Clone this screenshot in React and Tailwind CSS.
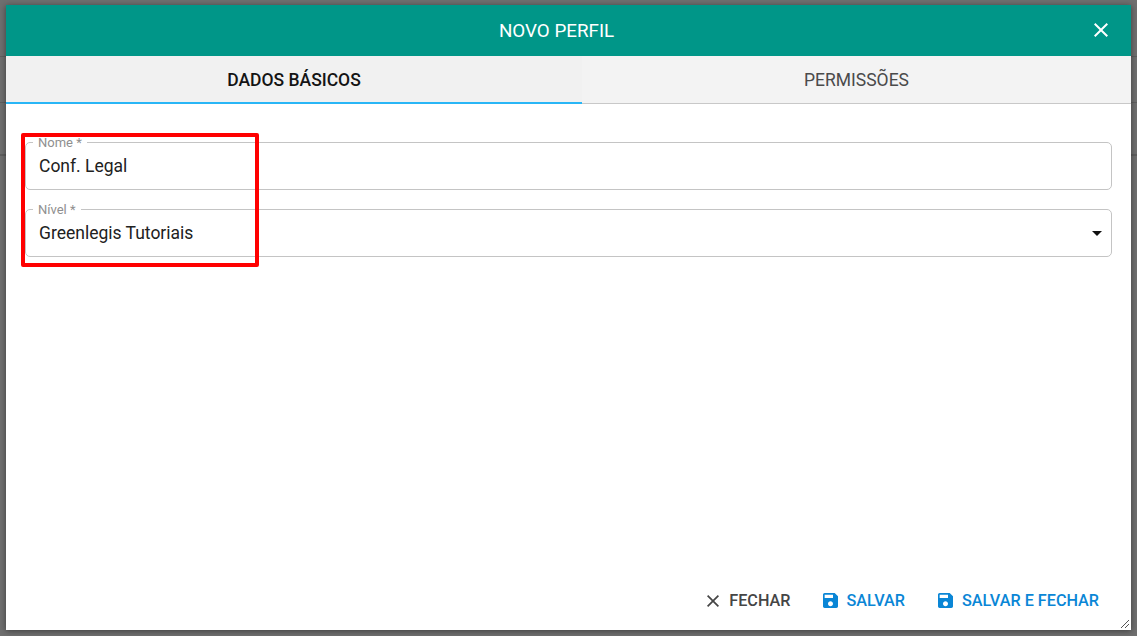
import React from 'react';

const CLOSE_PATH = 'M19 6.41L17.59 5 12 10.59 6.41 5 5 6.41 10.59 12 5 17.59 6.41 19 12 13.41 17.59 19 19 17.59 13.41 12z';

function CloseIcon({ size }) {
  return (
    <svg width={size} height={size} viewBox="5 5 14 14" fill="currentColor">
      <path d={CLOSE_PATH} />
    </svg>
  );
}

function SaveIcon() {
  return (
    <svg width="15" height="15" viewBox="3 3 18 18" fill="currentColor">
      <path d="M17 3H5c-1.11 0-2 .9-2 2v14c0 1.1.89 2 2 2h14c1.1 0 2-.9 2-2V7l-4-4zm-5 16c-1.66 0-3-1.34-3-3s1.34-3 3-3 3 1.34 3 3-1.34 3-3 3zm3-10H5V5h10v4z" />
    </svg>
  );
}

function Field({ label, value, select }) {
  return (
    <div className="relative h-[48px] rounded-[5px] border border-[#c4c4c4] pl-[13px] pr-[9px] flex items-center justify-between">
      <span className="absolute -top-[7px] left-[7px] bg-white px-[5px] text-[13px] leading-[14px] text-[#8f8f8f]">{label}</span>
      <span className="text-[17.5px] text-[#212121]">{value}</span>
      {select && (
        <svg width="10" height="5" viewBox="0 0 10 5" className="text-[#111]" fill="currentColor">
          <path d="M0 0h10L5 5z" />
        </svg>
      )}
    </div>
  );
}

export default function App() {
  return (
    <div className="relative w-[1137px] h-[636px] overflow-hidden bg-[#6f6f6f] font-['Roboto',sans-serif]">
      {/* page behind the dialog, only its row lines show */}
      <div className="h-[57px] border-b border-[#5e5e5e]" />
      <div className="h-[46px] border-b border-[#5e5e5e]" />
      <div className="h-[53px] border-b-2 border-[#5e5e5e]" />

      <div className="absolute left-[6px] top-[5px] w-[1125px] h-[625px] bg-white flex flex-col shadow-[0_1px_6px_rgba(0,0,0,0.45)]">
        <header className="relative h-[51px] shrink-0 bg-[#009688] flex items-center justify-center pr-[24px] pt-[1px] text-white text-[18.8px]">
          NOVO PERFIL
          <button className="absolute right-[23px] top-[18px] text-white">
            <CloseIcon size={14} />
          </button>
        </header>

        <div className="flex h-[48px] shrink-0 bg-[#f3f3f3] border-b border-[#c8c8c8]">
          <div className="w-[576px] h-[48px] pt-[3px] flex items-center justify-center bg-[#f1f1f1] border-b-2 border-[#29b6f6] text-[17.5px] font-medium text-[#141414]">
            DADOS BÁSICOS
          </div>
          <div className="flex-1 pt-[1px] flex items-center justify-center text-[17.5px] text-[#4a4a4a]">
            PERMISSÕES
          </div>
        </div>

        <div className="flex-1 flex flex-col gap-[19px] pl-[19px] pr-[19px] pt-[38px]">
          <Field label="Nome *" value="Conf. Legal" />
          <Field label="Nível *" value="Greenlegis Tutoriais" select />
        </div>

        <footer className="flex justify-end items-center gap-[32px] pr-[32px] pb-[17px] text-[16.2px] font-medium">
          <button className="mr-[1px] flex items-center gap-[10px] text-[#454545]">
            <CloseIcon size={12} />
            FECHAR
          </button>
          <button className="flex items-center gap-[8px] text-[#0a86d6]">
            <SaveIcon />
            SALVAR
          </button>
          <button className="ml-[1px] flex items-center gap-[9px] text-[#0a86d6]">
            <SaveIcon />
            SALVAR E FECHAR
          </button>
        </footer>

        <svg width="10" height="10" viewBox="0 0 10 10" className="absolute right-[1px] bottom-[1px] text-[#555]" stroke="currentColor" fill="none">
          <path d="M1 9l8-8M5 9l4-4" />
        </svg>

        {/* highlight box drawn over the form */}
        <div className="absolute left-[15px] top-[128px] w-[238px] h-[134px] border-[4px] border-[#ff0000] rounded-[2px]" />
      </div>
    </div>
  );
}
